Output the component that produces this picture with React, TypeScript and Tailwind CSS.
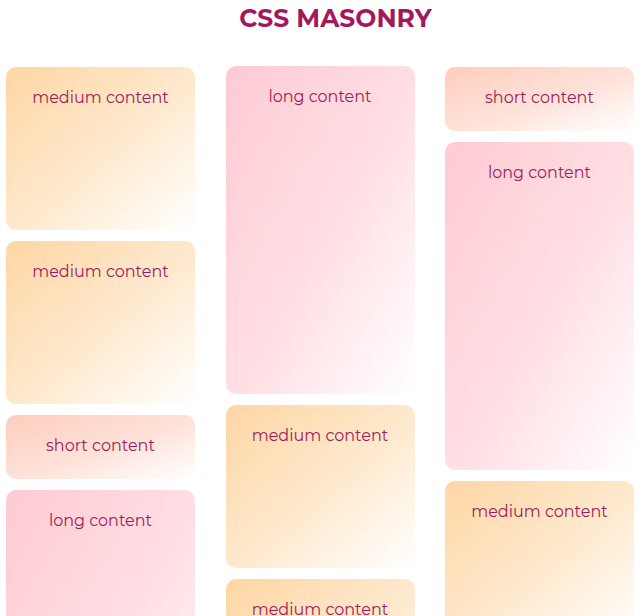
type Size = "short" | "medium" | "long";

const sizeClass: Record<Size, string> = {
  short: "h-[64px] from-[#fecdbd] via-[#fee3da]",
  medium: "h-[163px] from-[#fed6a3] via-[#feead0]",
  long: "h-[328px] from-[#ffcad3] via-[#ffe0e5]",
};

const columns: Size[][] = [
  ["medium", "medium", "short", "long"],
  ["long", "medium", "medium"],
  ["short", "long", "medium"],
];

function Card({ size }: { size: Size }) {
  return (
    <div
      className={`shrink-0 rounded-[10px] bg-linear-to-br via-55% to-white pt-[20px] text-center text-[16px] leading-[22px] text-[#9b1d5b] ${sizeClass[size]}`}
    >
      {size} content
    </div>
  );
}

export default function App() {
  return (
    <div className="h-[616px] overflow-hidden bg-white font-['Montserrat','Inter','Noto_Sans',sans-serif]">
      <h1 className="pl-[27px] pt-[3px] text-center text-[25px] font-bold leading-[30px] text-[#a3185b]">
        CSS MASONRY
      </h1>
      <div className="mt-[34px] grid grid-cols-[189px_189px_189px] gap-x-[30.5px] pl-[6px]">
        {columns.map((col, i) => (
          <div key={i} className={`flex flex-col gap-[11px] ${i === 1 ? "-mt-px" : ""}`}>
            {col.map((s, j) => (
              <Card key={j} size={s} />
            ))}
          </div>
        ))}
      </div>
    </div>
  );
}
